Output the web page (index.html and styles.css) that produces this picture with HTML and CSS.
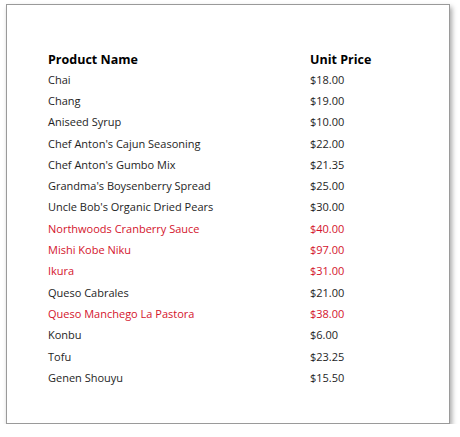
FILE: index.html
```html
<!DOCTYPE html>
<html>
<head>
<meta charset="utf-8">
<link rel="stylesheet" href="styles.css">
</head>
<body>
<div class="page">
  <div class="report">
    <div class="row head"><span>Product Name</span><span>Unit Price</span></div>
    <div class="row"><span>Chai</span><span>$18.00</span></div>
    <div class="row"><span>Chang</span><span>$19.00</span></div>
    <div class="row"><span>Aniseed Syrup</span><span>$10.00</span></div>
    <div class="row"><span>Chef Anton's Cajun Seasoning</span><span>$22.00</span></div>
    <div class="row"><span>Chef Anton's Gumbo Mix</span><span>$21.35</span></div>
    <div class="row"><span>Grandma's Boysenberry Spread</span><span>$25.00</span></div>
    <div class="row"><span>Uncle Bob's Organic Dried Pears</span><span>$30.00</span></div>
    <div class="row hot"><span>Northwoods Cranberry Sauce</span><span>$40.00</span></div>
    <div class="row hot"><span>Mishi Kobe Niku</span><span>$97.00</span></div>
    <div class="row hot"><span>Ikura</span><span>$31.00</span></div>
    <div class="row"><span>Queso Cabrales</span><span>$21.00</span></div>
    <div class="row hot"><span>Queso Manchego La Pastora</span><span>$38.00</span></div>
    <div class="row"><span>Konbu</span><span>$6.00</span></div>
    <div class="row"><span>Tofu</span><span>$23.25</span></div>
    <div class="row"><span>Genen Shouyu</span><span>$15.50</span></div>
  </div>
</div>
</body>
</html>
```
FILE: styles.css
```css
html, body { margin: 0; padding: 0; background: #fff; }
body { font-family: "Open Sans", "Noto Sans", sans-serif; color: #1e1e1e; }
.page {
  margin: 4px 0 0 6px;
  width: 444px;
  height: 420px;
  border: 1px solid #9a9a9a;
  box-shadow: 2px 3px 5px rgba(0,0,0,0.35);
  box-sizing: border-box;
  padding-top: 46px;
}
.report { padding-left: 41px; }
.row {
  display: grid;
  grid-template-columns: 262px 1fr;
  height: 21.3px;
  align-items: center;
  font-size: 11px;
}
.row.head { font-weight: 700; font-size: 12.5px; color: #000; height: 16px; margin-bottom: 1.5px; }
.row.hot { color: #d4142c; }
```
